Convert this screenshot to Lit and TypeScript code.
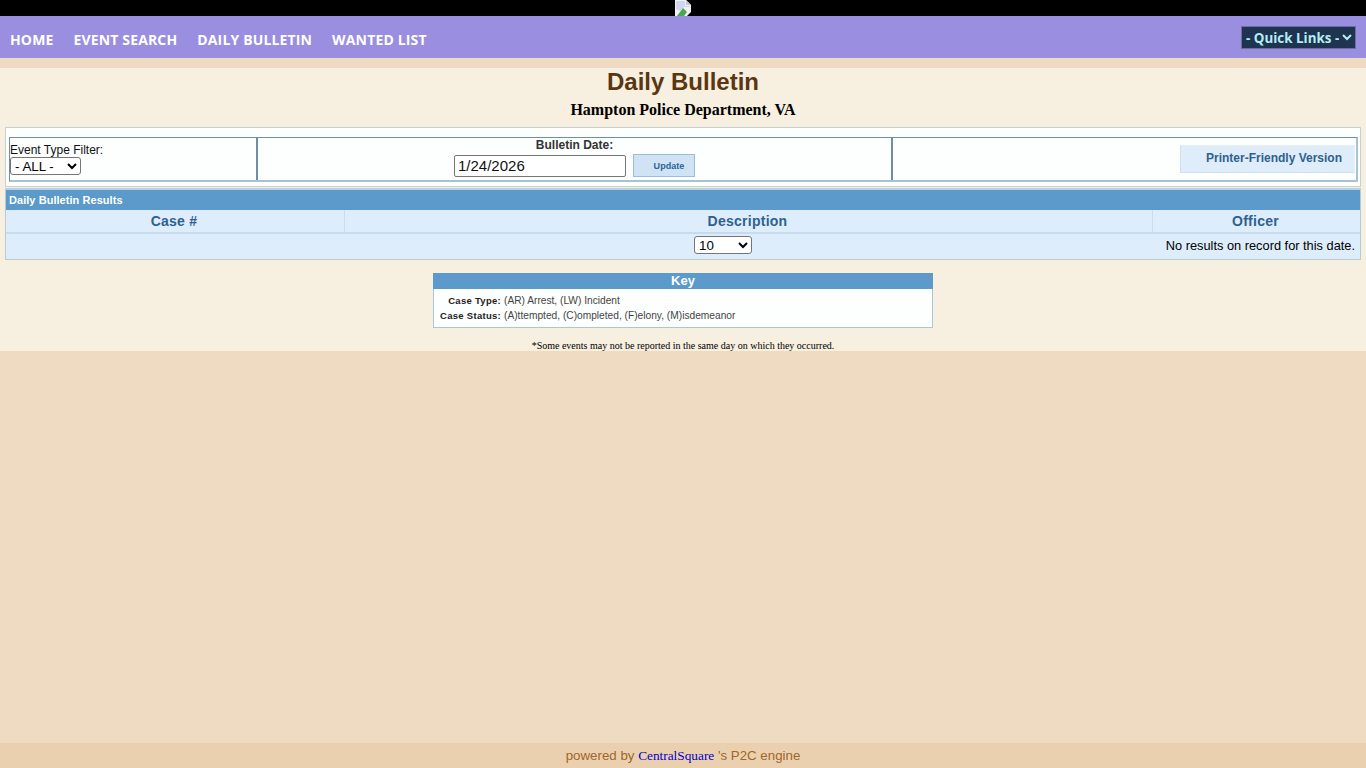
import { LitElement, html, css } from "lit";
import { customElement } from "lit/decorators.js";

@customElement("app-root")
export class AppRoot extends LitElement {
  static styles = css`
    :host { display: flex; flex-direction: column; height: 768px; background: #eedbc1; font-family: "Liberation Sans", Arial, sans-serif; color: #000; overflow: hidden; }
    .top { height: 16px; background: #000; display: flex; justify-content: center; overflow: hidden; }
    .top svg { display: block; width: 16px; height: 16px; }
    .nav { height: 42px; box-sizing: border-box; background: #9a8ee0; display: flex; align-items: center; justify-content: space-between; padding: 0 10px; flex: none; }
    .links { display: flex; gap: 20px; padding-top: 4px; }
    .links a { font: 700 14px "Open Sans", sans-serif; letter-spacing: .15px; color: #fff; text-decoration: none; }
    .quick { width: 115px; height: 23px; box-sizing: border-box; background: #1f3450; color: #b4eef2; font: 700 13.4px "Open Sans", sans-serif; border: 1px solid #6e6f9c; border-radius: 0; padding: 0; margin-top: 1px; }
    .spacer { height: 10px; flex: none; }
    .content { height: 283px; flex: none; background: #f7efe0; display: flex; flex-direction: column; }
    h1 { margin: 0; height: 29px; font-size: 24px; line-height: 28px; font-weight: bold; color: #5c3610; text-align: center; }
    h2 { margin: 0; height: 30px; font: bold 16px/26px "Liberation Serif", serif; text-align: center; }
    .filters { margin: 0 5px; height: 60px; box-sizing: border-box; background: #fdffff; border: 1px solid #c8d0cf; padding: 9px 2px 4px 3px; }
    .ftable { height: 45px; box-sizing: border-box; display: grid; grid-template-columns: 248px 635px 1fr; border: 1px solid #6d8ea5; border-right: 2px solid #a6c3d3; border-bottom: 2px solid #a6c3d3; }
    .fc { box-sizing: border-box; min-width: 0; }
    .fc.one { border-right: 2px solid #6d8ea5; padding: 6px 0 0 0; font-size: 12px; line-height: 13px; color: #111; }
    .fc.two { border-right: 2px solid #6d8ea5; text-align: center; font-size: 12px; line-height: 14px; font-weight: bold; color: #333; }
    .fc.three { display: flex; justify-content: flex-end; padding: 7px 0 0 0; }
    select { display: block; font-family: "Liberation Sans", Arial, sans-serif; font-size: 13.33px; background: #fff; color: #000; border: 1px solid #767676; border-radius: 3px; padding: 0; box-sizing: border-box; }
    .sel-type { width: 71px; height: 18px; }
    .date-row { display: flex; justify-content: flex-start; align-items: flex-start; padding-left: 196px; gap: 7px; margin-top: 2px; }
    .date { box-sizing: border-box; width: 172px; height: 22px; font: 15px "Liberation Sans", sans-serif; color: #111; border: 1px solid #767676; border-radius: 2px; padding: 0 3px 1px; background: #fff; margin: 1px 0 0; }
    .update { box-sizing: border-box; width: 62px; height: 23px; background: #cfe3f5; border: 1px solid #9dbcd8; color: #2a6496; font: bold 9px "Liberation Sans", sans-serif; letter-spacing: .05px; padding: 0 0 0 10px; }
    .printer { box-sizing: border-box; width: 175px; height: 28px; margin-right: 1px; background: #deedf9; border: 1px solid #e8f0f5; border-bottom-color: #cfdfeb; border-left-color: #cfdfeb; color: #2f6190; font: bold 12px "Liberation Sans", sans-serif; padding: 0 12px 2px 0; text-align: right; }
    .results { margin: 1px 5px 0; height: 72px; box-sizing: border-box; border: 1px solid #b9ccd6; border-top: 2px solid #b9d2e2; background: #ddedfb; }
    .rhead { height: 20px; background: #5b9aca; color: #fff; font-size: 11px; font-weight: bold; letter-spacing: .05px; line-height: 21px; padding-left: 3px; }
    .cols { display: grid; grid-template-columns: 339px 808px 1fr; height: 24px; box-sizing: border-box; border-bottom: 2px solid #c6dcec; }
    .cols div { text-align: center; color: #2f6190; font-size: 14px; font-weight: bold; letter-spacing: .25px; line-height: 22px; border-right: 1px solid #cbdeee; padding-right: 2px; }
    .cols div:last-child { border-right: 0; }
    .rrow { position: relative; height: 25px; display: flex; align-items: center; justify-content: flex-end; padding: 0 5px 2px 0; box-sizing: border-box; font-size: 12.8px; }
    .rrow select { position: absolute; left: 688px; top: 2px; width: 58px; height: 18px; }
    .key { width: 500px; margin: 13px auto 0; box-sizing: border-box; height: 55px; background: #fdffff; border: 1px solid #a9c6dc; border-top: 0; }
    .khead { height: 16px; background: #5b9aca; color: #fff; font-size: 13px; font-weight: bold; text-align: center; line-height: 16px; margin: 0 -1px; }
    .krow { display: grid; grid-template-columns: 67px 1fr; column-gap: 3px; font-size: 10.2px; line-height: 15px; color: #444; }
    .krows { padding-top: 4px; }
    .krow b { text-align: right; color: #222; font-size: 9.5px; letter-spacing: .28px; }
    .note { margin-top: 12px; font: 10px/11px "Liberation Serif", serif; text-align: center; }
    .grow { flex: 1; }
    .foot { height: 25px; flex: none; background: #ebd0b0; color: #a0662a; font-size: 13.3px; line-height: 26px; text-align: center; }
    .foot a { font-family: "Liberation Serif", serif; color: #0000c8; text-decoration: none; }
  `;

  render() {
    return html`
      <div class="top">
        <svg viewBox="0 0 16 16" aria-hidden="true">
          <path d="M0 0H11L16 5V12L12 16H0Z" fill="#f2f2f4" />
          <path d="M11 0V5H16Z" fill="#c4c6cc" />
          <path d="M1 1H10V6H15V7L9 7L5 11L1 9Z" fill="#cfd6f0" />
          <path d="M2 16L8 8L12 12L9 16Z" fill="#4ca64c" />
        </svg>
      </div>
      <div class="nav">
        <div class="links">
          <a href="#">HOME</a><a href="#">EVENT SEARCH</a><a href="#">DAILY BULLETIN</a><a href="#">WANTED LIST</a>
        </div>
        <select class="quick"><option>- Quick Links -</option></select>
      </div>
      <div class="spacer"></div>
      <div class="content">
        <h1>Daily Bulletin</h1>
        <h2>Hampton Police Department, VA</h2>
        <div class="filters">
          <div class="ftable">
            <div class="fc one">Event Type Filter:<select class="sel-type"><option>- ALL -</option></select></div>
            <div class="fc two">Bulletin Date:
              <div class="date-row">
                <input class="date" value="1/24/2026" />
                <button class="update">Update</button>
              </div>
            </div>
            <div class="fc three"><button class="printer">Printer-Friendly Version</button></div>
          </div>
        </div>
        <div class="results">
          <div class="rhead">Daily Bulletin Results</div>
          <div class="cols"><div>Case #</div><div>Description</div><div>Officer</div></div>
          <div class="rrow">
            <select><option>10</option></select>
            <span>No results on record for this date.</span>
          </div>
        </div>
        <div class="key">
          <div class="khead">Key</div>
          <div class="krows">
            <div class="krow"><b>Case Type:</b><span>(AR) Arrest, (LW) Incident</span></div>
            <div class="krow"><b>Case Status:</b><span>(A)ttempted, (C)ompleted, (F)elony, (M)isdemeanor</span></div>
          </div>
        </div>
        <div class="note">*Some events may not be reported in the same day on which they occurred.</div>
      </div>
      <div class="grow"></div>
      <div class="foot">powered by <a href="#">CentralSquare</a> 's P2C engine</div>
    `;
  }
}
